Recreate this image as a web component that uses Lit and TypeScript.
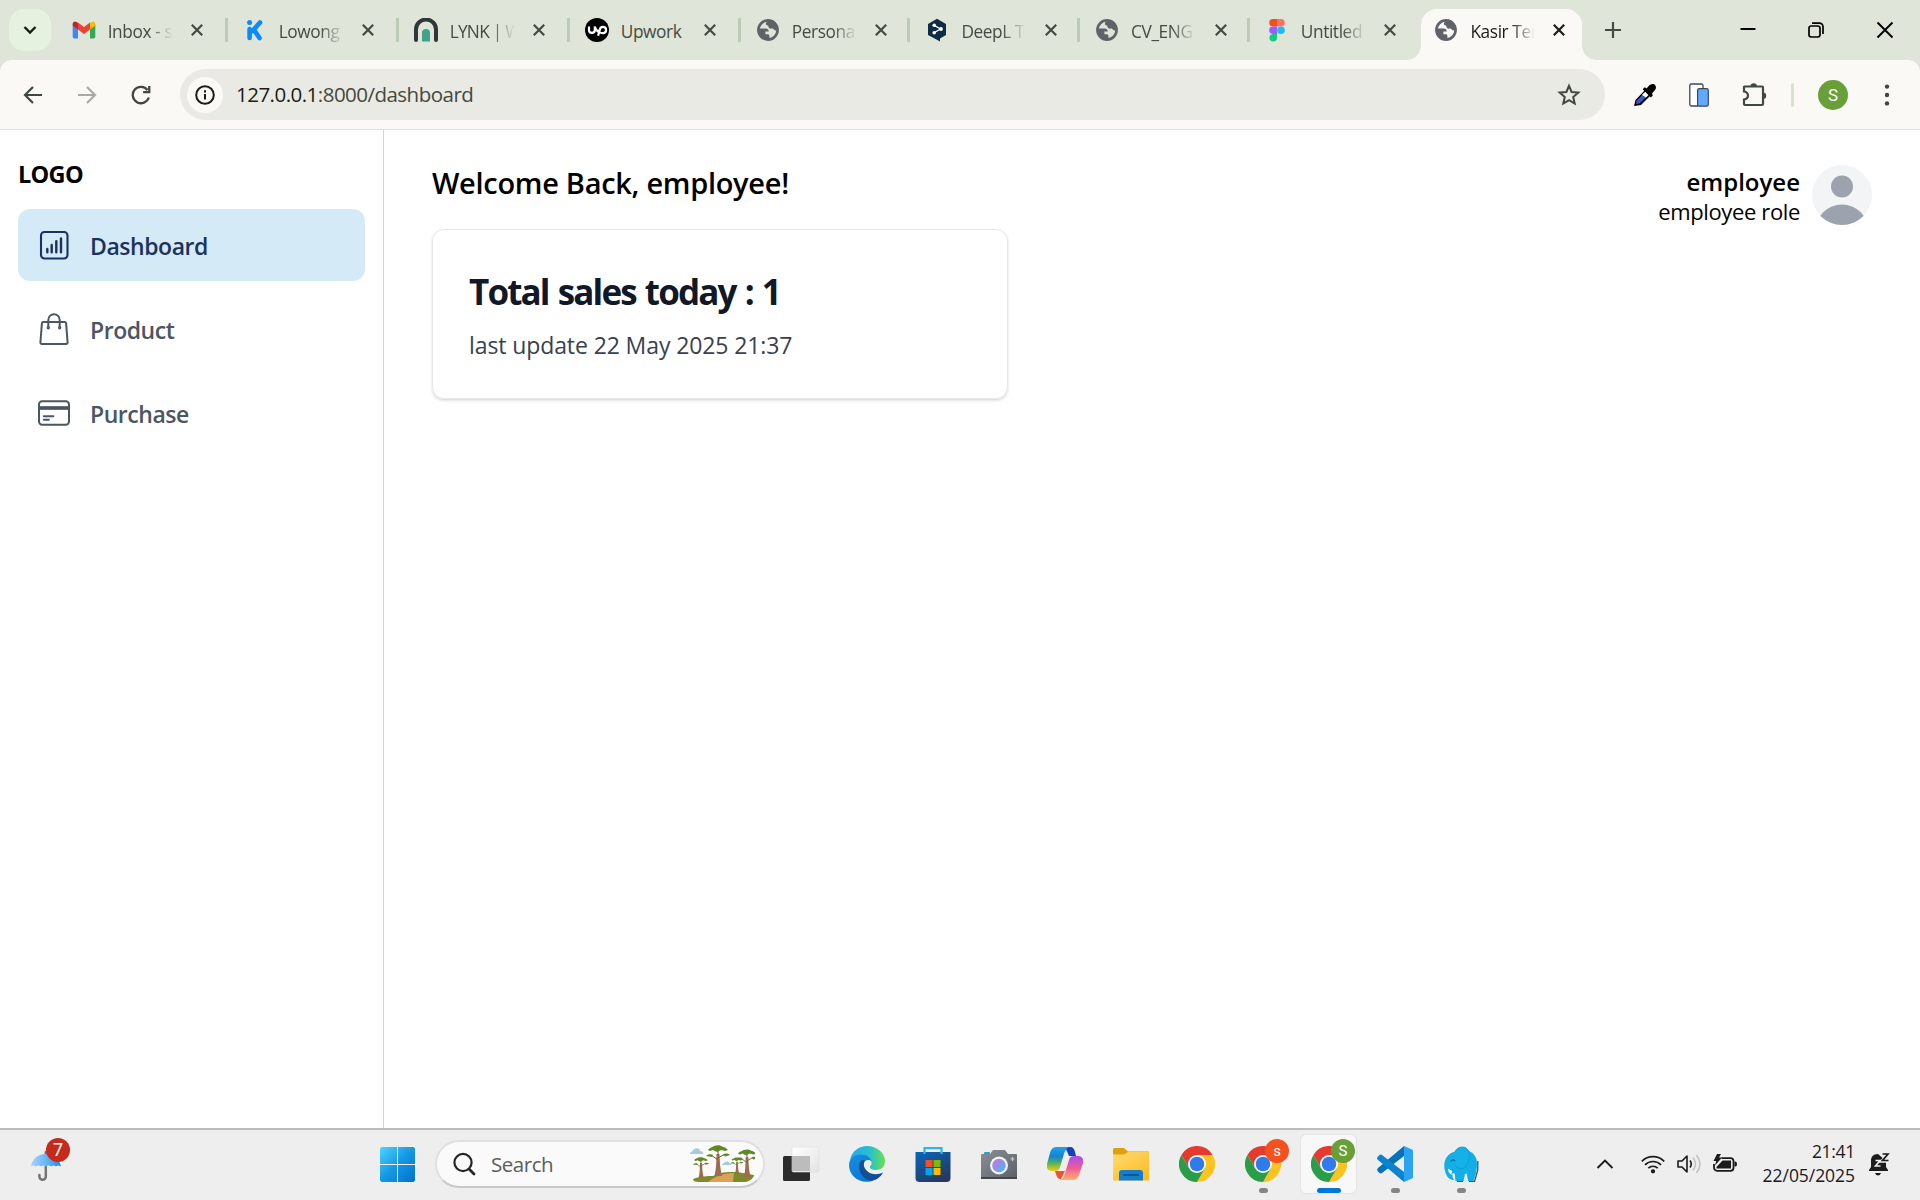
import { LitElement, html, css, svg } from "lit";
import { customElement, property } from "lit/decorators.js";
import { classMap } from "lit/directives/class-map.js";

const globe = html`<svg class="fav" viewBox="0 0 24 24"><circle cx="12" cy="12" r="9.6" fill="none" stroke="#5f6368" stroke-width="2.6"/><path d="M2 10.500H9.500C11.500 10.500 12.800 11.800 12.800 13.600H9.400V16.200H12C13.400 16.200 13.800 18 13.200 21.600C6 22.500 1 17 2 10.500zM12.500 2C11.700 4.200 9.800 3.900 9.800 5.700C9.800 7.600 12.500 6.700 12.500 8.800C12.500 10.300 14.300 11 15.800 10.500C17.600 10 18 12.800 19.800 12.600L22 12C22 6 18 2 12.500 2z" fill="#5f6368"/></svg>`;
const gmail = html`<svg class="fav" viewBox="0 0 24 24"><path d="M.7 6.500V18.700a1.700 1.700 0 0 0 1.700 1.700H6V11z" fill="#4285f4"/><path d="M18 11v9.400h3.600a1.700 1.700 0 0 0 1.700-1.700V6.500z" fill="#34a853"/><path d="M18 5v6.500l5.300-4V6c0-2.500-2.300-3.300-4-2z" fill="#fbbc04"/><path d="M6 11.500V4.500l6 4.600 6-4.600v7L12 16z" fill="#ea4335"/><path d="M.7 6v1.600l5.300 4V5L4.700 4C3 2.800.7 3.600.7 6z" fill="#c5221f"/></svg>`;
const kalibrr = html`<svg class="fav" viewBox="0 0 24 24"><g fill="none" stroke="#0a8bff" stroke-width="4.600" stroke-linecap="round"><path d="M6.600 11v9M17 4.500 9.500 13M11.500 12.500 16.500 20"/></g><circle cx="6.600" cy="4.500" r="2.500" fill="#0a8bff"/></svg>`;
const lynk = html`<svg class="fav" viewBox="0 0 24 24"><path d="M2 22V11.500a10 10 0 0 1 20 0V22" fill="none" stroke="#323539" stroke-width="4" stroke-linecap="round"/><path d="M8 23.500V15a4 4 0 0 1 8 0v8.500z" fill="#43a089"/></svg>`;
const upwork = html`<svg class="fav" viewBox="0 0 24 24"><circle cx="12" cy="12" r="12"/><path d="M4 8.500v3.500a2.900 2.900 0 0 0 5.800 0V8.500c1 3 2.400 5.300 4.600 6M13.100 17.800l1.800-6.300a3.100 3.100 0 1 1 2.900 3.600c-3 0-4.700-1.600-5.600-3.500" fill="none" stroke="#fff" stroke-width="2.200"/></svg>`;
const deepl = html`<svg class="fav" viewBox="0 0 24 24"><path d="M12 .8 21 6v11l-6 3.500v2.900l-3.500-2L3 17V6z" fill="#0f2b46"/><path d="M9.500 7.500 15.500 11 9.500 14.500" fill="none" stroke="#fff" stroke-width="1.400"/><g fill="#fff"><circle cx="9.200" cy="7.300" r="1.800"/><circle cx="16" cy="11" r="1.900"/><circle cx="9.200" cy="14.800" r="1.800"/></g></svg>`;
const figma = html`<svg class="fav" viewBox="0 0 24 24"><path d="M12 1H8a3.700 3.700 0 0 0 0 7.500h4z" fill="#f24e1e"/><path d="M12 1h4a3.700 3.700 0 0 1 0 7.500h-4z" fill="#ff7262"/><path d="M12 8.500H8a3.700 3.700 0 0 0 0 7.500h4z" fill="#a259ff"/><circle cx="16" cy="12.200" r="3.800" fill="#1abcfe"/><path d="M12 16H8a3.800 3.800 0 1 0 4 3.800z" fill="#0acf83"/></svg>`;

const chromeMark = svg`<path d="M3.200 12A24 24 0 0 1 44.800 12H24L13.600 30z" fill="#e33b2e"/><path d="M44.800 12A24 24 0 0 1 24 48L34.400 30 24 12z" fill="#fcc31e"/><path d="M24 48A24 24 0 0 1 3.200 12L13.600 30H34.400z" fill="#2a9d48"/><circle cx="24" cy="24" r="12" fill="#fff"/><circle cx="24" cy="24" r="9.700" fill="#2f7bee"/>`;
const chrome = html`<svg width="36" height="36" viewBox="0 0 48 48">${chromeMark}</svg>`;

@customElement("browser-tab")
class BrowserTab extends LitElement {
  @property({ attribute: false }) icon: unknown;
  @property() label = "";
  @property({ type: Boolean }) active = false;
  @property({ type: Boolean }) last = false;
  @property({ type: Boolean }) fits = false;
  static styles = css`
    :host { display: block; flex: none; width: 169.7px; height: 60px; }
    :host(.wide) { width: 171px; }
    .tab { display: flex; align-items: center; height: 60px; padding-left: 16px; box-sizing: border-box; position: relative; color: #454b42; }
    .tab:not(.nosep)::after { content: ""; position: absolute; right: -1px; top: 18px; width: 3px; height: 24px; background: #bccbb6; }
    .fav { width: 24px; height: 24px; flex: none; }
    .label { width: 66px; margin-left: 12px; padding-top: 4px; overflow: hidden; white-space: nowrap; font-size: 17.300px; line-height: 28px; letter-spacing: -.4px; }
    .tight { letter-spacing: -.75px; }
    .fade { -webkit-mask-image: linear-gradient(90deg, #000 62%, transparent 98%); mask-image: linear-gradient(90deg, #000 62%, transparent 98%); }
    .x { width: 12px; height: 12px; margin-left: 17.500px; flex: none; }
    .active { color: #1a1c18; }
    .active .x { margin-left: 16.500px; }
    .active::before { content: ""; position: absolute; z-index: 0; left: 2.500px; top: 9px; width: 161.500px; height: 51px; border-radius: 16px 16px 0 0; background: #fbf9f5; }
    .active > * { position: relative; }
    .ear { position: absolute; bottom: 0; width: 14px; height: 14px; }
    .left { left: -11.500px; background: radial-gradient(circle at 0 0, transparent 13.500px, #fbf9f5 14px); }
    .right { left: 163.500px; background: radial-gradient(circle at 100% 0, transparent 13.500px, #fbf9f5 14px); }
    .active > .ear { position: absolute; }
  `;
  render() {
    return html`<div class=${classMap({ tab: true, active: this.active, nosep: this.active || this.last })}>
      ${this.icon}<span class=${classMap({ label: true, fade: !this.fits, tight: this.label.includes("|") })}>${this.label}</span>
      <svg class="x" viewBox="0 0 12 12"><path d="M.8.8l10.400 10.400M11.200.8.800 11.200" stroke="currentColor" stroke-width="2.200"/></svg>
      ${this.active ? html`<i class="ear left"></i><i class="ear right"></i>` : ""}
    </div>`;
  }
}

@customElement("browser-chrome")
class BrowserChrome extends LitElement {
  static styles = css`
    :host { display: block; background: #dfe5d9; }
    .strip { display: flex; align-items: center; height: 60px; }
    .search { width: 42px; height: 42px; margin: 0 4.700px 0 9px; border-radius: 15px; background: #e6f2e0; display: grid; place-items: center; }
    .plus { margin-left: 17px; }
    .win { margin-left: auto; display: flex; align-items: center; gap: 52px; padding-right: 26px; }
    .bar { height: 70px; box-sizing: border-box; background: #fbf9f5; border-radius: 12px 12px 0 0; border-bottom: 1px solid #dde2d9; display: flex; align-items: center; padding: 0 23px; }
    .nav { display: flex; gap: 34px; width: 157px; }
    .omni { flex: none; width: 1425px; height: 51px; box-sizing: border-box; border-radius: 26px; background: #e9eae3; display: flex; align-items: center; padding: 0 24px 0 7px; color: #45483f; font-size: 20.500px; }
    .info { width: 36px; height: 36px; border-radius: 50%; background: #fbf9f5; display: grid; place-items: center; margin-right: 13px; }
    .url { letter-spacing: -.52px; flex: 1; padding-bottom: 2px; }
    .url b { font-weight: 400; color: #1b1c18; }
    .ext { display: flex; align-items: center; margin-left: 28px; }
    .phone { margin-left: 31.500px; }
    .puzzle { margin-left: 33.500px; }
    .sep { width: 3px; height: 24px; border-radius: 2px; background: #d6e4cd; margin: 0 25px 0 23px; }
    .me { width: 30px; height: 30px; border-radius: 50%; background: #689f38; color: #fff; font: 17px/30px Roboto, sans-serif; text-align: center; margin-left: -1px; }
    .more { margin-left: 36px; }
  `;
  render() {
    const tabs: [unknown, string][] = [
      [gmail, "Inbox - s"], [kalibrr, "Lowong"], [lynk, "LYNK | W"], [upwork, "Upwork"],
      [globe, "Persona"], [deepl, "DeepL T"], [globe, "CV_ENG"], [figma, "Untitled"], [globe, "Kasir Ter"],
    ];
    return html`
      <div class="strip">
        <div class="search"><svg width="14" height="10" viewBox="0 0 14 10"><path d="M1.500 2l5.500 5.500L12.500 2" fill="none" stroke="#1a1c18" stroke-width="2.400"/></svg></div>
        ${tabs.map(([icon, label], i) => html`<browser-tab class=${classMap({ wide: i < 4 })} .icon=${icon} label=${label} ?active=${i === 8} ?last=${i === 7} ?fits=${i === 3}></browser-tab>`)}
        <svg class="plus" width="16" height="16" viewBox="0 0 16 16"><path d="M8 0v16M0 8h16" stroke="#454b42" stroke-width="2.200"/></svg>
        <div class="win">
          <svg width="16" height="16" viewBox="0 0 16 16"><path d="M.5 7h15" stroke="#000" stroke-width="2"/></svg>
          <svg width="16" height="16" viewBox="0 0 16 16" fill="none" stroke="#000" stroke-width="1.700"><rect x="1" y="4" width="11" height="11" rx="2.200"/><path d="M4 1.200h7.500a3.500 3.500 0 0 1 3.500 3.500V12"/></svg>
          <svg width="18" height="18" viewBox="0 0 18 18"><path d="M1.500 1.500l15 15M16.500 1.500l-15 15" stroke="#000" stroke-width="1.900"/></svg>
        </div>
      </div>
      <div class="bar">
        <div class="nav">
          <svg width="20" height="20" viewBox="0 0 20 20" fill="none" stroke="#40483f" stroke-width="2.200"><path d="M19 10H2.500M10 2l-8 8 8 8"/></svg>
          <svg width="20" height="20" viewBox="0 0 20 20" fill="none" stroke="#a9aaa5" stroke-width="2.200"><path d="M1 10h16.500M10 2l8 8-8 8"/></svg>
          <svg width="20" height="20" viewBox="0 0 20 20" fill="none" stroke="#40483f" stroke-width="2.300"><path d="M17.800 12.500A8.200 8.200 0 1 1 16.500 5M18.300 1v6.200h-6.200"/></svg>
        </div>
        <div class="omni">
          <span class="info"><svg width="20" height="20" viewBox="0 0 20 20"><circle cx="10" cy="10" r="8.800" fill="none" stroke="#1a1c18" stroke-width="2"/><path d="M10 9v5.500M10 5.300v2.100" stroke="#1a1c18" stroke-width="2"/></svg></span>
          <span class="url"><b>127.0.0.1</b>:8000/dashboard</span>
          <svg width="24" height="24" viewBox="0 0 24 24"><path d="M12 2.800l2.600 6.200 6.700.6-5.100 4.400 1.500 6.500L12 17.100l-5.700 3.400 1.500-6.500-5.100-4.400L9.400 9z" fill="none" stroke="#40483f" stroke-width="2"/></svg>
        </div>
        <div class="ext">
          <svg width="24" height="24" viewBox="0 0 24 24"><path d="M1 23l1.500-6L13 6l5.500 5.500L8 22z"/><path d="M13 8l3.300 3.300-4 4-3.500-3.200z" fill="#fff"/><path d="M9 12.200l4 2L6.500 20.500l-3.500.6.800-3.500z" fill="#3657c8"/><path d="M9.700 6.200l2-2 2 1.300c1.500-2 3.500-5 6.500-4.500 3 .6 3.600 4 1.800 6L19 10.500l.8 2-2 2z"/></svg>
          <svg class="phone" width="20" height="24" viewBox="0 0 20 24"><path d="M14 5V2.500a1.500 1.500 0 0 0-1.500-1.500H2A1.500 1.500 0 0 0 .8 2.500v19A1.500 1.500 0 0 0 2.300 23H9" fill="#fff" stroke="#3f4658" stroke-width="1.300"/><rect x="8.600" y="5.600" width="10.700" height="17.600" rx="1.600" fill="#61a8ff" stroke="#3f4658" stroke-width="1.200"/></svg>
          <svg class="puzzle" width="26" height="26" viewBox="0 0 26 26"><path d="M2.500 4.500H20a1 1 0 0 1 1 1V22a1 1 0 0 1-1 1H3a1 1 0 0 1-1-1v-4.500c5.300-.8 5.300-7.200 0-8V5z" fill="none" stroke="#40483f" stroke-width="2.200"/><path d="M8.500 4.500a3.200 3.200 0 0 1 6.400 0zM21 10.500a3.200 3.200 0 0 1 0 6.400z" fill="#40483f"/></svg>
          <span class="sep"></span><span class="me">S</span>
          <svg class="more" width="6" height="22" viewBox="0 0 6 22" fill="#40483f"><circle cx="3" cy="2.600" r="2.200"/><circle cx="3" cy="11" r="2.200"/><circle cx="3" cy="19.400" r="2.200"/></svg>
        </div>
      </div>`;
  }
}

@customElement("dashboard-page")
class DashboardPage extends LitElement {
  static styles = css`
    :host { display: flex; background: #fff; min-height: 0; }
    aside { width: 384px; box-sizing: border-box; border-right: 1px solid #d1d5db; padding: 26px 18px 0; display: flex; flex-direction: column; flex: none; }
    .logo { font-size: 23.500px; line-height: 36px; font-weight: 700; letter-spacing: -.7px; height: 53px; color: #000; }
    nav { display: flex; flex-direction: column; gap: 12px; }
    .item { display: flex; align-items: center; gap: 20px; height: 72px; padding-left: 20px; border-radius: 12px; color: #4b5563; font-weight: 600; font-size: 23px; letter-spacing: -.45px; }
    .item span { padding-top: 2px; }
    .on { background: #d4ebf7; color: #1b325f; }
    main { flex: 1; display: flex; justify-content: space-between; padding: 35px 48px 0; }
    h1 { margin: 0; font-size: 29px; line-height: 36px; font-weight: 600; letter-spacing: -.3px; color: #000; }
    .card { margin-top: 28px; width: 576px; height: 170px; box-sizing: border-box; border: 1.500px solid #e5e7eb; border-radius: 12px; box-shadow: 0 1.500px 3px rgba(0,0,0,.1), 0 1px 2px rgba(0,0,0,.06); padding: 38px 36px 0; }
    h2 { margin: 0; font-size: 35px; line-height: 48px; font-weight: 700; letter-spacing: -1.850px; word-spacing: 1.800px; color: #111827; }
    .card p { margin: 11px 0 0; font-size: 23px; line-height: 36px; color: #374151; letter-spacing: -.1px; }
    .user { display: flex; gap: 12px; text-align: right; color: #000; height: 60px; }
    .name { font-size: 24px; line-height: 33px; font-weight: 600; letter-spacing: 0; }
    .role { font-size: 22px; line-height: 27px; letter-spacing: -.37px; }
  `;
  render() {
    const items = [
      ["Dashboard", svg`<g stroke-width="2.100"><rect x="3" y="3" width="26.500" height="26.500" rx="3.500"/><path stroke-width="2.400" stroke-linecap="round" d="M9.300 20v3.300M13.700 16v7.300M18.300 12.300v11M23 9.500v13.800"/></g>`],
      ["Product", svg`<g stroke-width="2"><path d="M5.300 9h21.400a1.400 1.400 0 0 1 1.400 1.300L29.600 29.500a1.400 1.400 0 0 1-1.400 1.500H3.800a1.400 1.400 0 0 1-1.400-1.500L3.900 10.300A1.400 1.400 0 0 1 5.300 9z"/><path d="M10.300 14.500V6.900a5.700 5.700 0 0 1 11.400 0v7.600"/><circle cx="10.300" cy="14.700" r=".7"/><circle cx="21.700" cy="14.700" r=".7"/></g>`],
      ["Purchase", svg`<g stroke-width="2"><rect x="1" y="4.200" width="30" height="23.600" rx="3.200"/><path d="M1 11h30" stroke-width="3.700"/><path stroke-linecap="round" d="M5.800 19.200h9.500M5.800 22.800h5"/></g>`],
    ] as const;
    return html`
      <aside><div class="logo">LOGO</div>
        <nav>${items.map(([t, i], n) => html`<div class=${classMap({ item: true, on: n === 0 })}><svg width="32" height="32" viewBox="0 0 32 32" fill="none" stroke="currentColor">${i}</svg><span>${t}</span></div>`)}</nav>
      </aside>
      <main>
        <section><h1>Welcome Back, employee!</h1>
          <div class="card"><h2>Total sales today : 1</h2><p>last update 22 May 2025 21:37</p></div></section>
        <div class="user"><div><div class="name">employee</div><div class="role">employee role</div></div>
          <svg width="60" height="60" viewBox="0 0 60 60"><clipPath id="c"><circle cx="30" cy="30" r="30"/></clipPath><g clip-path="url(#c)"><path fill="#f3f4f6" d="M0 0h60v60H0z"/><g fill="#9ca3af"><circle cx="30" cy="21.500" r="11"/><circle cx="30" cy="66" r="26.500"/></g></g></svg></div>
      </main>`;
  }
}

@customElement("task-bar")
class TaskBar extends LitElement {
  static styles = css`
    :host { display: flex; box-sizing: border-box; height: 72px; border-top: 2px solid #bbbcbc; background: #eee; }
    .weather { width: 380px; flex: none; padding: 17px 0 0 30px; box-sizing: border-box; }
    .dot { position: absolute; width: 24px; height: 24px; border-radius: 50%; color: #fff; font: 16px/24px Roboto, sans-serif; text-align: center; }
    .weather > div { position: relative; width: 32px; height: 36px; }
    .seven { left: 16px; top: -9px; background: #c42b1c; font-size: 18px; }
    .start { margin: 17px 20px 0 0; flex: none; }
    .find { width: 330px; height: 48px; margin-top: 10px; flex: none; box-sizing: border-box; border: 2px solid #e0e0e0; border-bottom-color: #c9c9c9; border-radius: 24px; background: #fafafa; display: flex; align-items: center; padding: 0 8px 0 15px; color: #5c5c5c; font-size: 20.500px; letter-spacing: -.45px; }
    .find span { margin-left: 15px; flex: 1; padding-bottom: 1px; }
    .apps { display: flex; margin-left: 3px; }
    .app { position: relative; width: 66px; height: 70px; display: grid; justify-content: center; padding-top: 16px; box-sizing: border-box; }
    .app > svg { position: relative; display: block; }
    .cur::before { content: ""; position: absolute; left: 4px; top: 4px; width: 55px; height: 58px; border: 1.500px solid #e3e3e3; border-radius: 6px; background: #f8f8f8; }
    .run::after, .cur::after { content: ""; position: absolute; left: 28.500px; top: 58px; width: 9px; height: 5px; border-radius: 3px; background: #858585; }
    .cur::after { left: 21px; width: 24px; background: #0078d4; }
    .badge { left: 35px; top: 9px; font-size: 15px; }
    .work { background: #f4511e; }
    .home { background: #689f38; }
    .tray { margin-left: auto; display: flex; align-items: center; padding: 0 30px 2px 0; }
    .gap { margin-left: 12px; }
    .net { margin-left: 27px; }
    .clock { width: 105px; margin: 0 13px 0 13px; padding-bottom: 2px; text-align: right; font-size: 17.500px; line-height: 24px; letter-spacing: -.05px; color: #1b1b1b; }
    .time { letter-spacing: -.3px; }
  `;
  render() {
    const tree = (x: number, y: number, s: number) => svg`<g transform="translate(${x} ${y}) scale(${s})"><path d="M-3.500 0C-1.500-8-1.800-14-1.500-22H1.500C1.800-14 2-8 4 0z" fill="#9c6c4b"/><path d="M0-16-7-21M0-18 7-22M0-21V-27" stroke="#80583d" stroke-width="1"/><path d="M-10-26c2-3 4-2 6-4 4-1 6-1 9 1 2 0 3 1 5 3l-3 1-4-1-4 2-4-2-3 1zM-12-20c2-2 5-2 7-1l-1 2zM5-21c2-2 5-2 7 0l-5 1.500z" fill="#5f8a22"/></g>`;
    const apps: [unknown, string?][] = [
      [html`<svg width="38" height="36" viewBox="0 0 38 36"><defs><linearGradient id="tv" y2="1"><stop stop-color="#fff"/><stop offset="1" stop-color="#e3e3e3"/></linearGradient></defs><rect x="1" y="10" width="27" height="25" rx="1.500" fill="#2c2c2c"/><rect x="10" y="1" width="27" height="25" rx="1.500" fill="url(#tv)" stroke="#ddd" stroke-width=".6"/><path d="M10 10h18v15H10z" fill="#bcbcbc"/></svg>`],
      [html`<svg width="36" height="36" viewBox="0 0 36 36"><defs><linearGradient id="e1"><stop stop-color="#2ba8e8"/><stop offset=".55" stop-color="#27bfd0"/><stop offset="1" stop-color="#69e04d"/></linearGradient><linearGradient id="e2" x2=".6" y2="1"><stop stop-color="#1a8fe0"/><stop offset="1" stop-color="#0877d2"/></linearGradient></defs><path d="M1 14C3 5 10 0 18 0c10 0 18 7 18 15 0 6-4 9-9 9-4 0-6.500-1.500-6-3.500 1.500-1.500 2-3 1.300-5C20 9 9 6 1 14z" fill="url(#e1)"/><path d="M0 19C0 12 6 8 12 8.500c6 0 10 3.500 10.500 7C21 13 15 13 14 19c-.8 8 4 14 11 15.500C12 39 0 31 0 19z" fill="url(#e2)"/><path d="M12.500 14C8 19 10 29 18 33.500c6 3 13-1 16-7-4 2-10 2.500-14 0-5-3-6.500-8-4-12z" fill="#114f94"/></svg>`],
      [html`<svg width="36" height="36" viewBox="0 0 36 36"><defs><linearGradient id="s" x2=".6" y2="1"><stop stop-color="#0867ba"/><stop offset="1" stop-color="#243a60"/></linearGradient></defs><path d="M.5 6h35v26a4 4 0 0 1-4 4h-27a4 4 0 0 1-4-4z" fill="url(#s)"/><path d="M9.500 8V2.200h17V8" fill="none" stroke="#2fb6ee" stroke-width="2.200"/><path d="M10.500 14h7v7h-7z" fill="#f25022"/><path d="M18.500 14h7v7h-7z" fill="#7fba00"/><path d="M10.500 22h7v7h-7z" fill="#00a4ef"/><path d="M18.500 22h7v7h-7z" fill="#ffb900"/></svg>`],
      [html`<svg width="36" height="36" viewBox="0 0 36 36"><defs><linearGradient id="cam" y2="1"><stop stop-color="#8b9096"/><stop offset="1" stop-color="#5b6066"/></linearGradient><linearGradient id="lens" x2="1" y2="1"><stop offset=".3" stop-color="#a985e5"/><stop offset="1" stop-color="#3fb9f5"/></linearGradient></defs><path d="M3 9V7q0-1 1-1h4q1 0 1 1v2z" fill="#1fa3e0"/><path d="M1 8h8l3-4h12l3 4h8q1 0 1 1v24H0V9q0-1 1-1z" fill="url(#cam)"/><path d="M0 31h36v2H0z" fill="#43474c"/><circle cx="18" cy="19.500" r="9" fill="#f4f4f4"/><circle cx="18" cy="19.500" r="6.800" fill="url(#lens)"/><path d="M31.500 11v4M29.500 13h4" stroke="#ccc" stroke-width="1.200"/></svg>`],
      [html`<svg width="36" height="36" viewBox="0 0 36 36"><defs><linearGradient id="p1" x2="0" y2="1"><stop stop-color="#1ea2ea"/><stop offset=".4" stop-color="#1683d2"/><stop offset=".65" stop-color="#4bae66"/><stop offset="1" stop-color="#f2cd0c"/></linearGradient><linearGradient id="p2" x2="0" y2="1"><stop stop-color="#a94fe8"/><stop offset=".5" stop-color="#ef5a9b"/><stop offset="1" stop-color="#ffb267"/></linearGradient></defs><path d="M18 1h5c3 0 4 1.500 5 5l1 4h-7z" fill="#1741ba"/><path d="M9 1h13c-3 1-4 4-5 7l-4 13c-1 3-2 4-5 4H5c-4 0-6-3-5-7L3 7c1-4 3-6 6-6z" fill="url(#p1)"/><path d="M8 25h10l-4 8c-3 0-4-1.500-5-5z" fill="#ee5332"/><path d="M27 10h4c4 0 6 3 5 7l-4 12c-1 3-3 5-6 5H13c3-1 4-4 5-7l4-13c1-3 2-4 5-4z" fill="url(#p2)"/></svg>`],
      [html`<svg width="36" height="36" viewBox="0 0 36 36"><defs><linearGradient id="f" x2=".8" y2="1"><stop stop-color="#ffdc73"/><stop offset="1" stop-color="#fdbb22"/></linearGradient></defs><path d="M0 9V3.500A1.500 1.500 0 0 1 1.500 2H11l4 3.500h20a1 1 0 0 1 1 1V12H0z" fill="#dfa00b"/><path d="M0 8.500h11L15 6h20a1 1 0 0 1 1 1v27.500H0z" fill="url(#f)"/><path d="M6 34.500V27a3 3 0 0 1 3-3h18a3 3 0 0 1 3 3v7.500z" fill="#117fcb"/><path d="M11 29h14" stroke="#0b5795" stroke-width="1.800" stroke-linecap="round"/></svg>`],
      [chrome],
      [html`${chrome}<span class="dot badge work">s</span>`, "run"],
      [html`${chrome}<span class="dot badge home">S</span>`, "cur"],
      [html`<svg width="36" height="36" viewBox="0 0 36 36"><path d="M27 0v10L5 27Q3.500 28 2 26.500l-1.500-1.500Q-.5 23.500 1 22z" fill="#0672b8"/><path d="M1 14Q-.5 12.500.5 11l1.500-1.500Q3.500 8 5 9l22 17v10z" fill="#0b84d0"/><path d="M27 0l8 3.500q1 .5 1 1.500v26q0 1-1 1.500L27 36z" fill="#2da4f3"/></svg>`, "run"],
      [html`<svg width="36" height="36" viewBox="0 0 36 36"><path d="M14 35.500h6M26 35.500h5.500L34.800 24V15" fill="none" stroke="#46565f" stroke-width="1.300"/><path d="M1.300 19C1.500 12 6 7 12 5.500 14 2.500 16.500 1 19.500 1c3 0 5 1.500 6.500 4 5 2 8.500 7 8 13.500-.2 6-1.200 11-3.500 16.500H25l-1.200-7.500L22 28l-1.300 7H12.500l-.8-7.500-2.200-.5c-.5 2.500.2 5 1.500 7-3.500 0-6.500-2-8-6-1.200-3-1.800-6-1.700-9z" fill="#12aee6"/><path d="M12 5.500c1.500-3 4.500-4.500 7.500-4.500 4 0 6 3 6.500 7 1 6-1.500 12.500-6.500 14.500-4 .5-7-1.500-8-4" fill="#14b0e8" stroke="#0c9ad0" stroke-width=".8"/><path d="M7.500 15.500q2.500-3 4.500-.5" fill="none" stroke="#086a99" stroke-width="1.100"/><path d="M5 22.500q.3 4.500 3.300 6.500l.9-4z" fill="#fff"/></svg>`, "run"],
    ];
    return html`
      <div class="weather"><div><svg width="32" height="36" viewBox="0 0 32 36"><defs><linearGradient id="u"><stop stop-color="#a7d3fa"/><stop offset=".6" stop-color="#5ab0f5"/><stop offset="1" stop-color="#1d85e5"/></linearGradient></defs><path d="M15.800 5v24.500a3.200 3.200 0 0 1-6.400 0V28" fill="none" stroke="#757575" stroke-width="2.500" stroke-linecap="round"/><path d="M1 19.500C2 12 8 7 15.800 7S29.500 12 31 19.500q-3-2-5 0-2.500-2-5 0-2.500-2-5 0-2.500-2-5 0-2.500-2-5 0-2.500-2-5 0z" fill="url(#u)"/></svg><span class="dot seven">7</span></div></div>
      <svg class="start" width="35" height="35" viewBox="0 0 35 35"><defs><linearGradient id="w" gradientUnits="userSpaceOnUse" x2="35" y2="35"><stop stop-color="#4fd3ff"/><stop offset=".5" stop-color="#1597e4"/><stop offset="1" stop-color="#0470cd"/></linearGradient></defs><path d="M1.500 0H17v17H0V1.500zM18 0h15.500L35 1.500V17H18zM0 18h17v17H1.500L0 33.500zM18 18h17v15.500L33.500 35H18z" fill="url(#w)"/></svg>
      <div class="find"><svg width="24" height="24" viewBox="0 0 24 24" fill="none" stroke="#252525" stroke-linecap="round"><circle cx="11" cy="10.500" r="8.600" stroke-width="2.200"/><path d="M17.500 17.500l4.500 4.500" stroke-width="2.800"/></svg><span>Search</span>
        <svg width="66" height="38" viewBox="0 0 66 38"><path d="M1 9c0-3 3-2 3-4 3-3 7-2 7 1 3 0 4 3 3 3zM33 20c0-2 2-1 3-3 3-1 4 0 4 1 2 0 3 2 2 2z" fill="#a6cbdf"/><path d="M4 34c8-3 14-3 20-3 10-5 16-4 24-4l17 3c0 3-5 7-9 7H10c-4 0-6-1-6-3z" fill="#7b8a2a"/><path d="M19 37c6-5 14-9 26-9l-1 9z" fill="#dba05a"/>${tree(12, 33, .68)}${tree(29, 31, 1)}${tree(48, 29, .54)}${tree(58, 32, .9)}</svg></div>
      <div class="apps">${apps.map(([i, c]) => html`<div class="app ${c ?? ""}">${i}</div>`)}</div>
      <div class="tray">
        <svg width="18" height="12" viewBox="0 0 18 12"><path d="M1.500 10L9 2.500l7.500 7.500" fill="none" stroke="#1b1b1b" stroke-width="1.900"/></svg>
        <svg class="net" width="24" height="20" viewBox="0 0 24 20" fill="none" stroke="#1b1b1b" stroke-width="1.700"><path d="M.8 7.300a15.800 15.800 0 0 1 22.400 0M4 10.800a11.300 11.300 0 0 1 16 0M7.300 14.200a6.700 6.700 0 0 1 9.400 0"/><circle cx="12" cy="17.300" r="1.300" fill="#1b1b1b"/></svg>
        <svg class="gap" width="24" height="20" viewBox="0 0 24 20" fill="none" stroke="#1b1b1b" stroke-width="1.600"><path d="M1 7h4l5-5v16l-5-5H1z" stroke-linejoin="round"/><path d="M13 6.500q2.500 3.500 0 7"/><g stroke="#c2c2c2"><path d="M16 3.500q5 6.500 0 13M19.500 1q7 9 0 18"/></g></svg>
        <svg class="gap" width="24" height="20" viewBox="0 0 24 20"><path d="M8.500 4.200h9a3 3 0 0 1 3 3v6.600a3 3 0 0 1-3 3H4a3 3 0 0 1-3-3V10" fill="none" stroke="#1b1b1b" stroke-width="1.800"/><path d="M9.500 6.500H18v8H3.500V13zM21.500 7.500h1q1.500 0 1.500 2.500t-1.500 2.500h-1zM4 0h4L6 3.500h3L2 11.500 3.200 7H.5z" fill="#1b1b1b"/></svg>
        <div class="clock"><div class="time">21:41</div><div>22/05/2025</div></div>
        <svg width="22" height="24" viewBox="0 0 22 24"><path d="M10 2c-5 0-7 3-7 7v6l-2 3v1h19v-1l-2-3V9z" fill="#1b1b1b"/><path d="M7 21h6q-1 2.500-3 2.500T7 21z" fill="#1b1b1b"/><path d="M7.500 8.500H12L7.500 14h5" fill="none" stroke="#eee" stroke-width="1.600"/><path d="M14.500 2h6l-6 7h6" fill="none" stroke="#eee" stroke-width="3.600"/><path d="M14.500 2h5.500l-5.500 6.500h6" fill="none" stroke="#1b1b1b" stroke-width="1.700"/></svg>
      </div>`;
  }
}

@customElement("app-root")
class AppRoot extends LitElement {
  static styles = css`
    :host { display: grid; grid-template-rows: 130px 1fr 72px; width: 1920px; height: 1200px; overflow: hidden; font-family: "Open Sans", "Noto Sans", sans-serif; }
  `;
  render() {
    return html`<browser-chrome></browser-chrome><dashboard-page></dashboard-page><task-bar></task-bar>`;
  }
}
